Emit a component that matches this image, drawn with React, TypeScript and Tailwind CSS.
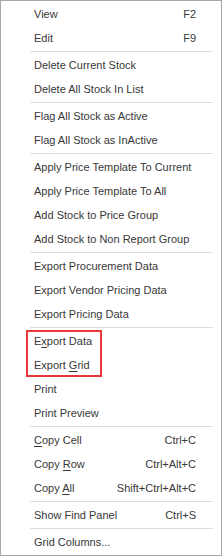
import React from "react";

type Item = { label: React.ReactNode; shortcut?: string } | "sep";

const u = (s: string) => <span className="underline underline-offset-2">{s}</span>;

const items: Item[] = [
  { label: "View", shortcut: "F2" },
  { label: "Edit", shortcut: "F9" },
  "sep",
  { label: "Delete Current Stock" },
  { label: "Delete All Stock In List" },
  "sep",
  { label: "Flag All Stock as Active" },
  { label: "Flag All Stock as InActive" },
  "sep",
  { label: "Apply Price Template To Current" },
  { label: "Apply Price Template To All" },
  { label: "Add Stock to Price Group" },
  { label: "Add Stock to Non Report Group" },
  "sep",
  { label: "Export Procurement Data" },
  { label: "Export Vendor Pricing Data" },
  { label: "Export Pricing Data" },
  "sep",
  { label: <>E{u("x")}port Data</> },
  { label: <>Export {u("G")}rid</> },
  { label: "Print" },
  { label: "Print Preview" },
  "sep",
  { label: <>{u("C")}opy Cell</>, shortcut: "Ctrl+C" },
  { label: <>Copy {u("R")}ow</>, shortcut: "Ctrl+Alt+C" },
  { label: <>Copy {u("A")}ll</>, shortcut: "Shift+Ctrl+Alt+C" },
  "sep",
  { label: "Show Find Panel", shortcut: "Ctrl+S" },
  "sep",
  { label: "Grid Columns..." },
];

export default function App() {
  return (
    <div
      className="relative h-[556px] w-[222px] border border-[#a7a7a7] bg-white p-px text-[11px] text-[#383838]"
      style={{ fontFamily: '"Liberation Sans", Arial, sans-serif' }}
    >
      {items.map((item, i) =>
        item === "sep" ? (
          <div key={i} className="flex h-[3px] items-center pl-[28px] pr-[7px]">
            <div className="h-px w-full bg-[#dedede]" />
          </div>
        ) : (
          <div key={i} className="flex h-6 items-center justify-between pl-[32px] pr-[24px]">
            <span>{item.label}</span>
            {item.shortcut && <span>{item.shortcut}</span>}
          </div>
        )
      )}
      <div className="absolute left-[25px] top-[329px] h-[47px] w-[76px] border-2 border-[#e8383b]" />
    </div>
  );
}
